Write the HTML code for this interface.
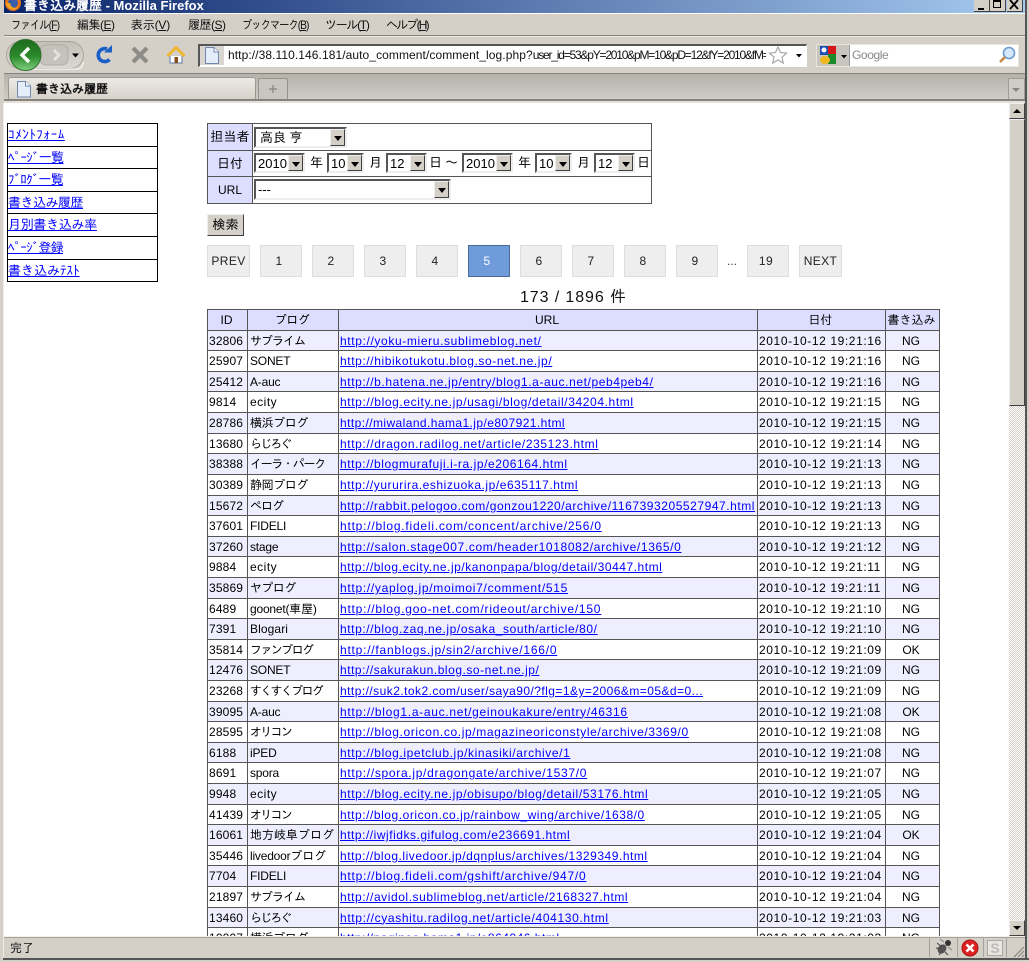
<!DOCTYPE html>
<html lang="ja"><head><meta charset="utf-8"><title>書き込み履歴</title>
<style>
html,body{margin:0;padding:0}
body{width:1029px;height:962px;position:relative;overflow:hidden;background:#d4d0c8;font:12px "Liberation Sans","IPAGothic","Noto Sans CJK JP",sans-serif;color:#000}
.a{position:absolute;white-space:nowrap}
u{text-decoration:underline}
#title{left:4px;top:0;width:1021px;height:13px;background:linear-gradient(90deg,#0a246a,#a6caf0)}
.menu{top:17px;font-size:12px;line-height:16px;color:#111;transform-origin:0 0}
.ln{left:4px;width:1021px}
.wb{top:0;width:15px;height:11px;background:#d4d0c8;border-right:1px solid #404040;border-bottom:1px solid #404040;box-sizing:content-box}
#page{left:4px;top:103px;width:1005px;height:833px;background:#fff;overflow:hidden}
#page .a{margin-left:-4px;margin-top:-103px}
#side{left:7px;top:123px;width:151px;height:159px;border-collapse:collapse;font-size:13px}
#side td{border:1px solid #000;padding:0;line-height:14px;vertical-align:middle;white-space:nowrap}
a{color:#00f;text-decoration:underline}
#f{left:207px;top:123px;width:445px;height:81px;box-sizing:border-box;border:1px solid #555;background:#fff}
.fth{position:absolute;left:0;width:44px;background:#ddf;border-right:1px solid #555;text-align:center;font-size:13px}
.sel{position:absolute;box-sizing:border-box;background:#fff;border:2px solid;border-color:#555 #eee #eee #555;font-size:13px;padding-left:2px;line-height:17px;margin:0!important}
.sel b{position:absolute;right:0;top:0;bottom:0;width:15px;background:#d4d0c8;border:1px solid;border-color:#eee #404040 #404040 #eee;box-sizing:border-box}
.sel b:after{content:"";position:absolute;left:3px;top:6px;border:4px solid transparent;border-top:5px solid #000;border-bottom:0}
.t{font-size:13px;line-height:16px}
.p{top:245px;width:42px;height:32px;box-sizing:border-box;background:#eee;border:1px solid #ddd;text-align:center;line-height:30px;font-size:12px;color:#222;letter-spacing:.4px;padding-right:4px}
#list{left:207px;top:309px;border-collapse:collapse;table-layout:fixed;width:732px;font-size:12px;background:#fff}
#list td,#list th{border:1px solid #555;padding:0 1px;overflow:hidden;white-space:nowrap;font-weight:normal;line-height:14px}
#list th{background:#ddf;text-align:center;padding:0 2px 0 0}
#list tr{height:21px}#list tr.s{height:20px}
#list tbody tr:nth-child(odd) td{background:#eef}
#list td:nth-child(1){letter-spacing:.15px}
#list td:nth-child(2){padding-left:2px;letter-spacing:-.2px}
#list td:nth-child(4){letter-spacing:.6px}
#list td:nth-child(5){text-align:center;padding-right:4px}
.k{padding-left:2px}
</style></head><body>

<div class="a" id="title"></div>
<svg class="a" style="left:5px;top:0" width="16" height="12" viewBox="0 0 16 12"><circle cx="8" cy="3" r="8" fill="#e8741a"/><circle cx="8" cy="3" r="5" fill="#3a5fa8"/><path d="M1 3C2 9 9 12 14 7 10 9 6 8 5 3Z" fill="#f5a623"/></svg>
<div class="a" style="left:24px;top:-1px;color:#fff;font-size:13px;font-weight:bold;line-height:14px">書き込み履歴 - Mozilla Firefox</div>
<div class="a wb" style="left:974px"><div class="a" style="left:4px;top:8px;width:6px;height:2px;background:#000"></div></div>
<div class="a wb" style="left:990px"><div class="a" style="left:3px;top:0;width:8px;height:8px;border:1px solid #000;border-top-width:2px;box-sizing:border-box"></div></div>
<div class="a wb" style="left:1007px"><svg class="a" style="left:2px;top:0" width="11" height="10"><path d="M1 0L9 9M9 0L1 9" stroke="#000" stroke-width="1.8"/></svg></div>

<div class="a ln" style="top:13px;height:1px;background:#fff"></div>
<div class="a menu" style="left:11px;letter-spacing:-1.05px;transform:scaleX(.86)">ファイル(<u>F</u>)</div>
<div class="a menu" style="left:77px;letter-spacing:-.5px">編集(<u>E</u>)</div>
<div class="a menu" style="left:131px;letter-spacing:-.2px">表示(<u>V</u>)</div>
<div class="a menu" style="left:188px;letter-spacing:-.5px">履歴(<u>S</u>)</div>
<div class="a menu" style="left:242px;letter-spacing:-1.2px;transform:scaleX(.86)">ブックマーク(<u>B</u>)</div>
<div class="a menu" style="left:325px;letter-spacing:-1.3px">ツール(<u>T</u>)</div>
<div class="a menu" style="left:386px;letter-spacing:-1.8px">ヘルプ(<u>H</u>)</div>
<div class="a ln" style="top:35px;height:1px;background:#86837c"></div>
<div class="a ln" style="top:36px;height:1px;background:#eeebe5"></div>

<!-- nav -->
<svg class="a" style="left:5px;top:38px" width="200" height="34" viewBox="5 38 200 34">
<defs>
<linearGradient id="g" x1="0" y1="0" x2="0" y2="1"><stop offset="0" stop-color="#1d6b1d"/><stop offset=".55" stop-color="#2c8a2c"/><stop offset="1" stop-color="#7fd07f"/></linearGradient>
<linearGradient id="pill" x1="0" y1="0" x2="0" y2="1"><stop offset="0" stop-color="#c2bfb8"/><stop offset="1" stop-color="#dcd9d2"/></linearGradient>
</defs>
<rect x="6.5" y="41.5" width="77" height="27" rx="13.5" fill="url(#pill)" stroke="#a9a69f"/>
<path d="M20 69H78Q82 69 83.5 62" fill="none" stroke="#fff"/>
<rect x="40" y="45" width="28" height="20" rx="6" fill="#c5c2bb" stroke="#b0ada6"/>
<circle cx="25.500" cy="55" r="15.500" fill="url(#g)" stroke="#2b702b"/>
<path d="M29 48L22 55L29 62" fill="none" stroke="#fff" stroke-width="3.400"/>
<path d="M54 50L59 55L54 60" fill="none" stroke="#e4e2dd" stroke-width="2.800"/>
<path d="M72 53.500H79L75.500 57.500Z" fill="#000"/>
<path d="M109.500 59.500A6.500 6.500 0 1 1 107 49" fill="none" stroke="#1a60c8" stroke-width="3.600"/>
<path d="M104 52.500H112V45Z" fill="#1a60c8"/>
<path d="M133 48L147 62M147 48L133 62" stroke="#8e8c86" stroke-width="4.200"/>
<path d="M170 56V63H182V56" fill="#fff" stroke="#5a78a8"/>
<path d="M167.500 56L176 47.500L184.500 56" fill="none" stroke="#f0b830" stroke-width="3"/>
<rect x="174.500" y="57" width="3.500" height="6" fill="#8a4b20"/>
</svg>

<!-- URL bar -->
<div class="a" style="left:198px;top:44px;width:609px;height:23px;box-sizing:border-box;background:#fff;border:1px solid;border-color:#555 #fff #fff #555;border-top-width:2px;border-left-width:2px"></div>
<div class="a" style="left:200px;top:46px;width:24px;height:19px;background:#d9d6cf"></div>
<svg class="a" style="left:204px;top:47px" width="16" height="18"><path d="M1.500 .5H10L14.500 5V16.500H1.500Z" fill="#e4eefb" stroke="#7088b0"/><path d="M10 .5V5H14.500" fill="#fff" stroke="#7088b0"/></svg>
<div class="a" id="u" style="left:228px;top:47px;font-size:12px;line-height:16px;letter-spacing:.08px;width:538px;overflow:hidden;color:#111">http://38.110.146.181/auto_comment/comment_log.php?<span style="letter-spacing:-1.2px">user_id=53&amp;pY=2010&amp;pM=10&amp;pD=12&amp;fY=2010&amp;fM=</span></div>
<svg class="a" style="left:768px;top:45px" width="36" height="20"><path d="M10 2L12.500 7.500L18.500 8.200L14 12.200L15.300 18L10 15L4.700 18L6 12.200L1.500 8.200L7.500 7.500Z" fill="#fff" stroke="#a8a8a8" stroke-width="1.200"/><path d="M28 9H34L31 12.500Z" fill="#000"/></svg>

<!-- search -->
<div class="a" style="left:816px;top:44px;width:203px;height:23px;box-sizing:border-box;background:#fff;border:1px solid #e8e5df"></div>
<div class="a" style="left:817px;top:45px;width:32px;height:21px;background:#c8c5be;border-right:1px solid #999"></div>
<svg class="a" style="left:820px;top:46px" width="28" height="19"><rect x="0" y="0" width="8" height="9" fill="#1c50b0"/><rect x="8" y="0" width="8" height="8" fill="#d81818"/><rect x="8" y="8" width="8" height="10" fill="#1a8a2a"/><ellipse cx="5" cy="14" rx="5" ry="4" fill="#f0b820"/><circle cx="4" cy="4" r="2.500" fill="#fff"/><path d="M21 9H27L24 12.500Z" fill="#000"/></svg>
<div class="a" style="left:852px;top:47px;font-size:12px;line-height:16px;color:#888;letter-spacing:-.4px">Google</div>
<svg class="a" style="left:998px;top:46px" width="18" height="18"><circle cx="11" cy="7" r="5.500" fill="#d5e8fa" stroke="#6a9ad0" stroke-width="1.600"/><path d="M7 11L2 16" stroke="#c88a40" stroke-width="2.600"/></svg>

<div class="a ln" style="top:73px;height:1px;background:#86837c"></div>
<div class="a ln" style="top:74px;height:26px;background:linear-gradient(#b5b2ab,#d0cdc6)"></div>
<!-- tabs -->
<div class="a" style="left:8px;top:77px;width:248px;height:24px;box-sizing:border-box;background:linear-gradient(#eceae5,#d4d0c8);border:1px solid #9a978f;border-bottom:0;border-radius:3px 3px 0 0"></div>
<svg class="a" style="left:17px;top:81px" width="14" height="17"><path d="M.5 .5H8.500L13.500 5V16H.5Z" fill="#e4eefb" stroke="#7088b0"/><path d="M8.500 .5V5H13.500" fill="#fff" stroke="#7088b0"/></svg>
<div class="a" style="left:36px;top:81px;font-size:12px;font-weight:bold;line-height:16px;color:#111">書き込み履歴</div>
<div class="a" style="left:258px;top:78px;width:30px;height:22px;box-sizing:border-box;background:#c9c6bf;border:1px solid #96938c;border-bottom:0;border-radius:2px 2px 0 0"></div>
<svg class="a" style="left:269px;top:85px" width="8" height="8"><path d="M4 0V8M0 4H8" stroke="#8e8b85" stroke-width="1.400"/></svg>
<div class="a" style="left:1008px;top:78px;width:17px;height:22px;box-sizing:border-box;background:#cfccc5;border:1px solid #a09d96;border-bottom:0"></div>
<div class="a" style="left:1012px;top:88px;border:4px solid transparent;border-top:4px solid #888;border-bottom:0"></div>
<div class="a ln" style="top:99px;height:2px;background:#86837c"></div>
<div class="a ln" style="top:101px;height:2px;background:#e4e1db"></div>

<!-- page -->
<div class="a" id="page">
<table class="a" id="side">
<tr style="height:23px"><td><a href="#" style="letter-spacing:.6px">ｺﾒﾝﾄﾌｫｰﾑ</a></td></tr>
<tr style="height:22px"><td><a href="#" style="letter-spacing:-.6px">ﾍﾟｰｼﾞ一覧</a></td></tr>
<tr style="height:23px"><td><a href="#" style="letter-spacing:-.7px">ﾌﾞﾛｸﾞ一覧</a></td></tr>
<tr style="height:22px"><td class="k"><a href="#" style="letter-spacing:-.5px">書き込み履歴</a></td></tr>
<tr style="height:23px"><td class="k"><a href="#" style="letter-spacing:-.3px">月別書き込み率</a></td></tr>
<tr style="height:23px"><td><a href="#" style="letter-spacing:-.7px">ﾍﾟｰｼﾞ登録</a></td></tr>
<tr style="height:22px"><td class="k"><a href="#">書き込みﾃｽﾄ</a></td></tr>
</table>

<div class="a" id="f">
 <div class="fth" style="top:0;height:26px;line-height:26px;border-bottom:1px solid #555">担当者</div>
 <div class="fth" style="top:27px;height:25px;line-height:25px;border-bottom:1px solid #555">日付</div>
 <div class="fth" style="top:53px;height:26px;line-height:26px;font-size:12px">URL</div>
 <div style="position:absolute;left:44px;right:0;top:26px;height:1px;background:#555"></div>
 <div style="position:absolute;left:44px;right:0;top:52px;height:1px;background:#555"></div>
 <div class="sel" style="left:46px;top:3px;width:93px;height:21px;padding-left:4px">高良 亨<b></b></div>
 <div class="sel" style="left:46px;top:29px;width:51px;height:20px">2010<b></b></div>
 <div class="sel" style="left:119px;top:29px;width:37px;height:20px">10<b></b></div>
 <div class="sel" style="left:178px;top:29px;width:41px;height:20px">12<b></b></div>
 <div class="sel" style="left:254px;top:29px;width:51px;height:20px">2010<b></b></div>
 <div class="sel" style="left:327px;top:29px;width:37px;height:20px">10<b></b></div>
 <div class="sel" style="left:386px;top:29px;width:41px;height:20px">12<b></b></div>
 <div class="sel" style="left:46px;top:55px;width:197px;height:21px">---<b></b></div>
 <div class="t" style="position:absolute;left:102px;top:31px">年</div>
 <div class="t" style="position:absolute;left:161px;top:31px">月</div>
 <div class="t" style="position:absolute;left:221px;top:31px">日</div>
 <div class="t" style="position:absolute;left:237px;top:31px">～</div>
 <div class="t" style="position:absolute;left:310px;top:31px">年</div>
 <div class="t" style="position:absolute;left:369px;top:31px">月</div>
 <div class="t" style="position:absolute;left:429px;top:31px">日</div>
</div>

<div class="a" style="left:207px;top:214px;width:37px;height:22px;box-sizing:border-box;background:#d4d0c8;border:1px solid;border-color:#eee #404040 #404040 #eee;text-align:center;font-size:13px;line-height:19px">検索</div>

<div class="a p" style="left:207px;width:43px;padding:0">PREV</div>
<div class="a p" style="left:260px">1</div>
<div class="a p" style="left:312px">2</div>
<div class="a p" style="left:364px">3</div>
<div class="a p" style="left:416px">4</div>
<div class="a p" style="left:468px;background:#6f9bdb;border-color:#4a6a9a;color:#fff">5</div>
<div class="a p" style="left:520px">6</div>
<div class="a p" style="left:572px">7</div>
<div class="a p" style="left:624px">8</div>
<div class="a p" style="left:676px">9</div>
<div class="a" style="left:727px;top:254px;color:#444;font-size:12px">...</div>
<div class="a p" style="left:747px">19</div>
<div class="a p" style="left:799px;width:43px;padding:0">NEXT</div>

<div class="a" style="left:520px;top:289px;font-size:16px;line-height:18px;color:#111;letter-spacing:.9px">173 / 1896 件</div>

<table class="a" id="list">
<colgroup><col style="width:40px"><col style="width:91px"><col style="width:419px"><col style="width:128px"><col style="width:54px"></colgroup>
<thead><tr><th>ID</th><th style="letter-spacing:-.6px">ブログ</th><th>URL</th><th>日付</th><th>書き込み</th></tr></thead>
<tbody>
<tr class="s"><td>32806</td><td style="letter-spacing:-1px">サブライム</td><td><a href="#" style="letter-spacing:.63px">http://yoku-mieru.sublimeblog.net/</a></td><td>2010-10-12 19:21:16</td><td>NG</td></tr>
<tr><td>25907</td><td>SONET</td><td><a href="#" style="letter-spacing:.6px">http://hibikotukotu.blog.so-net.ne.jp/</a></td><td>2010-10-12 19:21:16</td><td>NG</td></tr>
<tr class="s"><td>25412</td><td>A-auc</td><td><a href="#" style="letter-spacing:.59px">http://b.hatena.ne.jp/entry/blog1.a-auc.net/peb4peb4/</a></td><td>2010-10-12 19:21:16</td><td>NG</td></tr>
<tr><td>9814</td><td style="letter-spacing:.5px">ecity</td><td><a href="#" style="letter-spacing:.61px">http://blog.ecity.ne.jp/usagi/blog/detail/34204.html</a></td><td>2010-10-12 19:21:15</td><td>NG</td></tr>
<tr><td>28786</td><td style="letter-spacing:-.4px">横浜ブログ</td><td><a href="#" style="letter-spacing:.42px">http://miwaland.hama1.jp/e807921.html</a></td><td>2010-10-12 19:21:15</td><td>NG</td></tr>
<tr class="s"><td>13680</td><td style="letter-spacing:-2px">らじろぐ</td><td><a href="#" style="letter-spacing:.6px">http://dragon.radilog.net/article/235123.html</a></td><td>2010-10-12 19:21:14</td><td>NG</td></tr>
<tr><td>38388</td><td style="letter-spacing:-1.3px">イーラ・パーク</td><td><a href="#" style="letter-spacing:.57px">http://blogmurafuji.i-ra.jp/e206164.html</a></td><td>2010-10-12 19:21:13</td><td>NG</td></tr>
<tr><td>30389</td><td style="letter-spacing:-.4px">静岡ブログ</td><td><a href="#" style="letter-spacing:.54px">http://yururira.eshizuoka.jp/e635117.html</a></td><td>2010-10-12 19:21:13</td><td>NG</td></tr>
<tr class="s"><td>15672</td><td style="letter-spacing:-1px">ペログ</td><td><a href="#" style="letter-spacing:.55px">http://rabbit.pelogoo.com/gonzou1220/archive/1167393205527947.html</a></td><td>2010-10-12 19:21:13</td><td>NG</td></tr>
<tr><td>37601</td><td>FIDELI</td><td><a href="#" style="letter-spacing:.78px">http://blog.fideli.com/concent/archive/256/0</a></td><td>2010-10-12 19:21:13</td><td>NG</td></tr>
<tr class="s"><td>37260</td><td>stage</td><td><a href="#" style="letter-spacing:.64px">http://salon.stage007.com/header1018082/archive/1365/0</a></td><td>2010-10-12 19:21:12</td><td>NG</td></tr>
<tr><td>9884</td><td style="letter-spacing:.5px">ecity</td><td><a href="#" style="letter-spacing:.53px">http://blog.ecity.ne.jp/kanonpapa/blog/detail/30447.html</a></td><td>2010-10-12 19:21:11</td><td>NG</td></tr>
<tr><td>35869</td><td style="letter-spacing:-.6px">ヤプログ</td><td><a href="#" style="letter-spacing:.7px">http://yaplog.jp/moimoi7/comment/515</a></td><td>2010-10-12 19:21:11</td><td>NG</td></tr>
<tr class="s"><td>6489</td><td>goonet(車屋)</td><td><a href="#" style="letter-spacing:.77px">http://blog.goo-net.com/rideout/archive/150</a></td><td>2010-10-12 19:21:10</td><td>NG</td></tr>
<tr><td>7391</td><td style="letter-spacing:.1px">Blogari</td><td><a href="#" style="letter-spacing:.58px">http://blog.zaq.ne.jp/osaka_south/article/80/</a></td><td>2010-10-12 19:21:10</td><td>NG</td></tr>
<tr class="s"><td>35814</td><td style="letter-spacing:-1.6px">ファンブログ</td><td><a href="#" style="letter-spacing:.77px">http://fanblogs.jp/sin2/archive/166/0</a></td><td>2010-10-12 19:21:09</td><td>OK</td></tr>
<tr><td>12476</td><td>SONET</td><td><a href="#" style="letter-spacing:.53px">http://sakurakun.blog.so-net.ne.jp/</a></td><td>2010-10-12 19:21:09</td><td>NG</td></tr>
<tr><td>23268</td><td style="letter-spacing:-1.7px">すくすくブログ</td><td><a href="#" style="letter-spacing:.45px">http://suk2.tok2.com/user/saya90/?flg=1&amp;y=2006&amp;m=05&amp;d=0...</a></td><td>2010-10-12 19:21:09</td><td>NG</td></tr>
<tr class="s"><td>39095</td><td>A-auc</td><td><a href="#" style="letter-spacing:.7px">http://blog1.a-auc.net/geinoukakure/entry/46316</a></td><td>2010-10-12 19:21:08</td><td>OK</td></tr>
<tr><td>28595</td><td style="letter-spacing:-1.7px">オリコン</td><td><a href="#" style="letter-spacing:.62px">http://blog.oricon.co.jp/magazineoriconstyle/archive/3369/0</a></td><td>2010-10-12 19:21:08</td><td>NG</td></tr>
<tr class="s"><td>6188</td><td>iPED</td><td><a href="#" style="letter-spacing:.61px">http://blog.ipetclub.jp/kinasiki/archive/1</a></td><td>2010-10-12 19:21:08</td><td>NG</td></tr>
<tr><td>8691</td><td>spora</td><td><a href="#" style="letter-spacing:.69px">http://spora.jp/dragongate/archive/1537/0</a></td><td>2010-10-12 19:21:07</td><td>NG</td></tr>
<tr><td>9948</td><td style="letter-spacing:.5px">ecity</td><td><a href="#" style="letter-spacing:.61px">http://blog.ecity.ne.jp/obisupo/blog/detail/53176.html</a></td><td>2010-10-12 19:21:05</td><td>NG</td></tr>
<tr class="s"><td>41439</td><td style="letter-spacing:-1.7px">オリコン</td><td><a href="#" style="letter-spacing:.55px">http://blog.oricon.co.jp/rainbow_wing/archive/1638/0</a></td><td>2010-10-12 19:21:05</td><td>NG</td></tr>
<tr><td>16061</td><td style="letter-spacing:0">地方岐阜ブログ</td><td><a href="#" style="letter-spacing:.52px">http://iwjfidks.gifulog.com/e236691.html</a></td><td>2010-10-12 19:21:04</td><td>OK</td></tr>
<tr class="s"><td>35446</td><td>livedoorブログ</td><td><a href="#" style="letter-spacing:.53px">http://blog.livedoor.jp/dqnplus/archives/1329349.html</a></td><td>2010-10-12 19:21:04</td><td>NG</td></tr>
<tr><td>7704</td><td>FIDELI</td><td><a href="#" style="letter-spacing:.75px">http://blog.fideli.com/gshift/archive/947/0</a></td><td>2010-10-12 19:21:04</td><td>NG</td></tr>
<tr><td>21897</td><td style="letter-spacing:-1px">サブライム</td><td><a href="#" style="letter-spacing:.56px">http://avidol.sublimeblog.net/article/2168327.html</a></td><td>2010-10-12 19:21:04</td><td>NG</td></tr>
<tr class="s"><td>13460</td><td style="letter-spacing:-2px">らじろぐ</td><td><a href="#" style="letter-spacing:.65px">http://cyashitu.radilog.net/article/404130.html</a></td><td>2010-10-12 19:21:03</td><td>NG</td></tr>
<tr><td>10007</td><td style="letter-spacing:-.4px">横浜ブログ</td><td><a href="#" style="letter-spacing:.5px">http://naginoo.hama1.jp/e864946.html</a></td><td>2010-10-12 19:21:03</td><td>NG</td></tr>
</tbody></table>
</div>

<!-- scrollbar -->
<div class="a" style="left:1009px;top:103px;width:16px;height:833px;background:#fff;background-image:repeating-conic-gradient(#d4d0c8 0 25%,#fff 0 50%);background-size:2px 2px"></div>
<div class="a" style="left:1009px;top:103px;width:16px;height:16px;box-sizing:border-box;background:#d4d0c8;border:1px solid;border-color:#eee #404040 #404040 #eee"></div>
<div class="a" style="left:1013px;top:109px;border:4px solid transparent;border-bottom:4px solid #000;border-top:0"></div>
<div class="a" style="left:1009px;top:119px;width:16px;height:287px;box-sizing:border-box;background:#d4d0c8;border:1px solid;border-color:#eee #404040 #404040 #eee"></div>
<div class="a" style="left:1009px;top:920px;width:16px;height:16px;box-sizing:border-box;background:#d4d0c8;border:1px solid;border-color:#eee #404040 #404040 #eee"></div>
<div class="a" style="left:1013px;top:926px;border:4px solid transparent;border-top:4px solid #000;border-bottom:0"></div>
<div class="a" style="left:1025px;top:0;width:2px;height:960px;background:#555"></div>
<div class="a" style="left:1027px;top:0;width:2px;height:962px;background:#d4d0c8"></div>

<!-- status -->
<div class="a" style="left:4px;top:936px;width:1021px;height:1px;background:#f2f0ea"></div>
<div class="a" style="left:4px;top:937px;width:1021px;height:1px;background:#a5a29b"></div>
<div class="a" style="left:10px;top:940px;font-size:12px;line-height:16px;color:#111">完了</div>
<div class="a" style="left:929px;top:938px;width:1px;height:19px;background:#a5a29b"></div>
<div class="a" style="left:957px;top:938px;width:1px;height:19px;background:#a5a29b"></div>
<div class="a" style="left:983px;top:938px;width:1px;height:19px;background:#a5a29b"></div>
<div class="a" style="left:1006px;top:938px;width:1px;height:19px;background:#a5a29b"></div>
<svg class="a" style="left:934px;top:938px" width="20" height="18"><ellipse cx="8" cy="11" rx="4" ry="5" fill="#555" transform="rotate(40 8 11)"/><circle cx="14" cy="5" r="3" fill="#333"/><path d="M3 5L8 9M2 10L7 11M5 17L8 13M11 14L14 17" stroke="#444"/><path d="M10 4L6 1M14 9L18 12" stroke="#999" stroke-width="1.500"/></svg>
<svg class="a" style="left:961px;top:939px" width="18" height="18"><circle cx="9" cy="9" r="8" fill="#d22"/><circle cx="9" cy="9" r="8" fill="none" stroke="#a11"/><path d="M5.500 5.500L12.500 12.500M12.500 5.500L5.500 12.500" stroke="#fff" stroke-width="2.600"/></svg>
<div class="a" style="left:987px;top:940px;width:16px;height:16px;box-sizing:border-box;border:1px solid #aaa;background:#e8e5df;color:#bbb;font-weight:bold;font-size:14px;line-height:14px;text-align:center">S</div>
<svg class="a" style="left:1012px;top:945px" width="13" height="13"><path d="M12 2L2 12M12 6L6 12M12 10L10 12" stroke="#8a877f" stroke-width="1.200"/></svg>
<div class="a" style="left:0;top:958px;width:1029px;height:2px;background:#555"></div>
<div class="a" style="left:0;top:960px;width:1029px;height:2px;background:#d4d0c8"></div>
<div class="a" style="left:0;top:13px;width:3px;height:947px;background:#d4d0c8"></div>
<div class="a" style="left:3px;top:103px;width:1px;height:855px;background:#eeebe5"></div>
</body></html>
